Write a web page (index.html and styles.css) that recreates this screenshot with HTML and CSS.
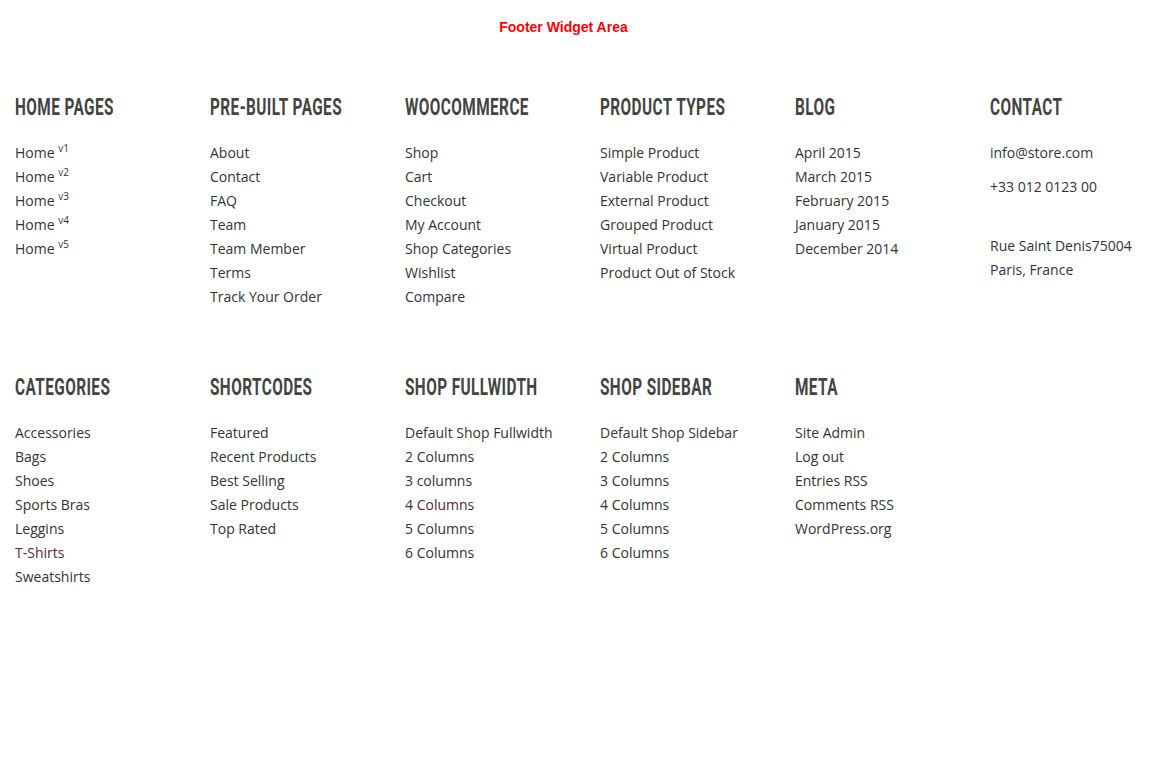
FILE: index.html
```html
<!DOCTYPE html>
<html>
<head>
<meta charset="utf-8">
<link rel="stylesheet" href="styles.css">
</head>
<body>
<div class="page">
  <h2 class="area-title">Footer Widget Area</h2>
  <div class="widgets">
    <section class="widget">
      <h3 class="widget-title"><span>Home Pages</span></h3>
      <ul class="links">
        <li>Home <sup>v1</sup></li>
        <li>Home <sup>v2</sup></li>
        <li>Home <sup>v3</sup></li>
        <li>Home <sup>v4</sup></li>
        <li>Home <sup>v5</sup></li>
      </ul>
    </section>
    <section class="widget">
      <h3 class="widget-title"><span>Pre-built Pages</span></h3>
      <ul class="links">
        <li>About</li><li>Contact</li><li>FAQ</li><li>Team</li><li>Team Member</li><li>Terms</li><li>Track Your Order</li>
      </ul>
    </section>
    <section class="widget">
      <h3 class="widget-title"><span>WooCommerce</span></h3>
      <ul class="links">
        <li>Shop</li><li>Cart</li><li>Checkout</li><li>My Account</li><li>Shop Categories</li><li>Wishlist</li><li>Compare</li>
      </ul>
    </section>
    <section class="widget">
      <h3 class="widget-title"><span>Product Types</span></h3>
      <ul class="links">
        <li>Simple Product</li><li>Variable Product</li><li>External Product</li><li>Grouped Product</li><li>Virtual Product</li><li>Product Out of Stock</li>
      </ul>
    </section>
    <section class="widget">
      <h3 class="widget-title"><span>Blog</span></h3>
      <ul class="links">
        <li>April 2015</li><li>March 2015</li><li>February 2015</li><li>January 2015</li><li>December 2014</li>
      </ul>
    </section>
    <section class="widget">
      <h3 class="widget-title"><span>Contact</span></h3>
      <div class="contact">
        <p class="c-line">info@store.com</p>
        <p class="c-line">+33 012 0123 00</p>
        <p class="c-addr">Rue Saint Denis75004<br>Paris, France</p>
      </div>
    </section>

    <section class="widget">
      <h3 class="widget-title"><span>Categories</span></h3>
      <ul class="links">
        <li>Accessories</li><li>Bags</li><li>Shoes</li><li>Sports Bras</li><li>Leggins</li><li class="visited">T-Shirts</li><li>Sweatshirts</li>
      </ul>
    </section>
    <section class="widget">
      <h3 class="widget-title"><span>Shortcodes</span></h3>
      <ul class="links">
        <li>Featured</li><li>Recent Products</li><li>Best Selling</li><li>Sale Products</li><li>Top Rated</li>
      </ul>
    </section>
    <section class="widget">
      <h3 class="widget-title"><span>Shop Fullwidth</span></h3>
      <ul class="links">
        <li>Default Shop Fullwidth</li><li>2 Columns</li><li>3 columns</li><li class="visited">4 Columns</li><li>5 Columns</li><li>6 Columns</li>
      </ul>
    </section>
    <section class="widget">
      <h3 class="widget-title"><span>Shop Sidebar</span></h3>
      <ul class="links">
        <li>Default Shop Sidebar</li><li>2 Columns</li><li>3 Columns</li><li>4 Columns</li><li>5 Columns</li><li>6 Columns</li>
      </ul>
    </section>
    <section class="widget">
      <h3 class="widget-title"><span>Meta</span></h3>
      <ul class="links">
        <li>Site Admin</li><li>Log out</li><li>Entries RSS</li><li>Comments RSS</li><li>WordPress.org</li>
      </ul>
    </section>
  </div>
</div>
</body>
</html>
```

FILE: styles.css
```css
html, body {
  margin: 0;
  padding: 0;
  background: #fff;
}
.page {
  width: 1164px;
}
.area-title {
  width: 1127px;
  margin: 0;
  padding-top: 18px;
  text-align: center;
  font-family: "Liberation Sans", Arial, sans-serif;
  font-weight: bold;
  font-size: 14px;
  line-height: 18px;
  color: #ff0000;
}
.widgets {
  display: grid;
  grid-template-columns: repeat(6, 195px);
  padding-top: 56px;
}
.widget {
  padding-left: 15px;
  min-height: 280px;
}
.widget-title {
  margin: 0 0 19px 0;
  font-family: Roboto, "DejaVu Sans Condensed", sans-serif;
  font-weight: 700;
  font-size: 24px;
  line-height: 30px;
  text-transform: uppercase;
  color: #444;
  white-space: nowrap;
  letter-spacing: 0.65px;
}
.widget-title span {
  display: inline-block;
  transform: scaleX(0.64);
  transform-origin: left center;
}
.links {
  list-style: none;
  margin: 0;
  padding: 0;
  font-family: "Open Sans", sans-serif;
  font-size: 14px;
  line-height: 24px;
  color: #333;
}
.links sup {
  font-size: 10px;
  line-height: 0;
  vertical-align: 6px;
}
.links .visited {
  color: #552a2a;
}
.contact {
  font-family: "Open Sans", sans-serif;
  font-size: 14px;
  line-height: 24px;
  color: #333;
}
.c-line {
  margin: 0 0 10px 0;
}
.c-addr {
  margin: 35px 0 0 0;
}
```
